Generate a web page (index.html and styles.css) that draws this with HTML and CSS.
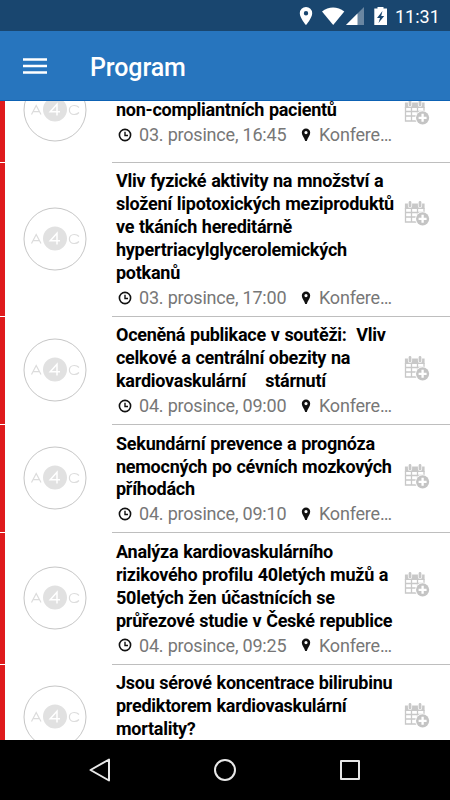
FILE: index.html
```
<!DOCTYPE html>
<html lang="cs">
<head>
<meta charset="utf-8">
<title>Program</title>
<link rel="stylesheet" href="styles.css">
</head>
<body>
<svg width="0" height="0" class="defs">
  <symbol id="logo" viewBox="0 0 64 64">
    <circle cx="32" cy="32" r="31" fill="#fff" stroke="#c6c6c6" stroke-width="1"/>
    <circle cx="32" cy="31.500" r="12" fill="#e1e1e1"/>
    <g fill="none" stroke="#dcdcdc" stroke-width="1.200">
      <path d="M8.500 36.500 13.200 27.500 18 36.500M10.200 33.700H16.300"/>
      <path d="M56 29.500C54.500 27.800 53 27.500 51.200 27.500C44.800 27.500 44.800 36.500 51.200 36.500C53 36.500 54.500 36.200 56 34.500"/>
    </g>
    <path d="M34 37.500V26.200L27.200 33.800H37" fill="none" stroke="#fff" stroke-width="1.500"/>
  </symbol>
  <symbol id="clock" viewBox="0 0 14 14">
    <circle cx="7" cy="7" r="5.600" fill="none" stroke="#111" stroke-width="1.600"/>
    <path d="M7 3.800V7.500H10" fill="none" stroke="#111" stroke-width="1.400"/>
  </symbol>
  <symbol id="pin" viewBox="0 0 10 14">
    <path fill="#111" fill-rule="evenodd" d="M5 .5A4.200 4.200 0 0 0 .8 4.700C.8 7.500 3.500 9.700 4.200 13H5.800C6.500 9.700 9.200 7.500 9.200 4.700A4.200 4.200 0 0 0 5 .5ZM5 3A1.600 1.600 0 1 1 5 6.200A1.600 1.600 0 0 1 5 3Z"/>
  </symbol>
  <symbol id="cal" viewBox="0 0 26 27">
    <path d="M1.500 8V22H20V8M7.500 8V22M13.500 8V22M1.500 12.500H20M1.500 17H19" fill="none" stroke="#c8c8c8" stroke-width="1.300"/>
    <path d="M.9 3.500H20.600V9H.9Z" fill="#c8c8c8"/>
    <path d="M6 2.500V6M16 2.500V6" stroke="#fff" stroke-width="4.200" stroke-linecap="round"/>
    <path d="M6 2.500V6M16 2.500V6" stroke="#c8c8c8" stroke-width="2.800" stroke-linecap="round"/>
    <circle cx="18.600" cy="18.800" r="7.400" fill="#fff"/>
    <circle cx="18.600" cy="18.800" r="6.600" fill="#c4c4c4"/>
    <path d="M18.600 14.800V22.800M14.600 18.800H22.600" stroke="#fff" stroke-width="2.300"/>
  </symbol>
</svg>
<div class="screen">
  <div class="status">
    <svg width="110" height="20" viewBox="0 0 110 20" fill="#fff">
      <path fill-rule="evenodd" d="M16 1A6.200 6.200 0 0 0 9.800 7.200C9.800 12 16 19 16 19S22.200 12 22.200 7.200A6.200 6.200 0 0 0 16 1ZM16 5A2.200 2.200 0 1 1 16 9.400A2.200 2.200 0 0 1 16 5Z"/>
      <path d="M32 5.500C38.500.3 47.500.3 54.300 5.500L43.200 19Z"/>
      <path d="M74 1V19H56Z" opacity=".35"/><path d="M67.500 7.500V19H56Z"/>
      <path fill-rule="evenodd" d="M87.500 1H93.500V2.500H97V19H84.300V2.500H87.500ZM92.500 5 87 12H90L88.500 17 94.200 10H91.200Z"/>
    </svg>
    <span class="time">11:31</span>
  </div>
  <header class="bar">
    <svg width="24" height="18" viewBox="0 0 24 18"><path d="M0 1.500H24M0 8H24M0 14.500H24" stroke="#fff" stroke-width="2.300"/></svg>
    <h1>Program</h1>
  </header>
  <main class="list">
    <article class="row first">
      <div class="side"><svg class="logo"><use href="#logo"/></svg></div>
      <div class="body">
        <div class="text"><h2>non-compliantních pacientů</h2>
        <p><svg class="clock"><use href="#clock"/></svg><span class="date">03. prosince, 16:45</span><svg class="pin"><use href="#pin"/></svg><span>Konfere…</span></p></div>
        <svg class="cal"><use href="#cal"/></svg>
      </div>
    </article>
    <article class="row">
      <div class="side"><svg class="logo"><use href="#logo"/></svg></div>
      <div class="body">
        <div class="text"><h2>Vliv fyzické aktivity na množství a<br>složení lipotoxických meziproduktů<br>ve tkáních hereditárně<br>hypertriacylglycerolemických<br>potkanů</h2>
        <p><svg class="clock"><use href="#clock"/></svg><span class="date">03. prosince, 17:00</span><svg class="pin"><use href="#pin"/></svg><span>Konfere…</span></p></div>
        <svg class="cal"><use href="#cal"/></svg>
      </div>
    </article>
    <article class="row">
      <div class="side"><svg class="logo"><use href="#logo"/></svg></div>
      <div class="body">
        <div class="text"><h2>Oceněná publikace v soutěži:&nbsp; Vliv<br>celkové a centrální obezity na<br>kardiovaskulární&nbsp;&nbsp;&nbsp; stárnutí</h2>
        <p><svg class="clock"><use href="#clock"/></svg><span class="date">04. prosince, 09:00</span><svg class="pin"><use href="#pin"/></svg><span>Konfere…</span></p></div>
        <svg class="cal"><use href="#cal"/></svg>
      </div>
    </article>
    <article class="row">
      <div class="side"><svg class="logo"><use href="#logo"/></svg></div>
      <div class="body">
        <div class="text"><h2>Sekundární prevence a prognóza<br>nemocných po cévních mozkových<br>příhodách</h2>
        <p><svg class="clock"><use href="#clock"/></svg><span class="date">04. prosince, 09:10</span><svg class="pin"><use href="#pin"/></svg><span>Konfere…</span></p></div>
        <svg class="cal"><use href="#cal"/></svg>
      </div>
    </article>
    <article class="row">
      <div class="side"><svg class="logo"><use href="#logo"/></svg></div>
      <div class="body">
        <div class="text"><h2>Analýza kardiovaskulárního<br>rizikového profilu 40letých mužů a<br>50letých žen účastnících se<br>průřezové studie v České republice</h2>
        <p><svg class="clock"><use href="#clock"/></svg><span class="date">04. prosince, 09:25</span><svg class="pin"><use href="#pin"/></svg><span>Konfere…</span></p></div>
        <svg class="cal"><use href="#cal"/></svg>
      </div>
    </article>
    <article class="row">
      <div class="side"><svg class="logo"><use href="#logo"/></svg></div>
      <div class="body">
        <div class="text"><h2>Jsou sérové koncentrace bilirubinu<br>prediktorem kardiovaskulární<br>mortality?</h2>
        <p></p></div>
        <svg class="cal"><use href="#cal"/></svg>
      </div>
    </article>
  </main>
  <nav class="nav">
    <svg viewBox="0 0 24 24"><path d="M21 1.500V22.500L2.500 12Z"/></svg>
    <svg viewBox="0 0 24 24"><circle cx="12" cy="12" r="10"/></svg>
    <svg viewBox="0 0 24 24"><rect x="3" y="3" width="18" height="18"/></svg>
  </nav>
</div>
</body>
</html>
```
FILE: styles.css
```
* { box-sizing: border-box; }
body, h1, h2, p { margin: 0; }
body { width: 450px; height: 800px; overflow: hidden; font-family: Roboto, sans-serif; background: #fff; }
svg { display: block; flex: none; }
.defs { position: absolute; }
.screen { display: flex; flex-direction: column; height: 800px; }
.status { flex: none; height: 31px; padding: 1px 10px 0 0; background: #19466f; color: #fff; display: flex; align-items: center; justify-content: flex-end; }
.time { width: 45px; margin-left: -5px; font-size: 18px; font-weight: 400; letter-spacing: 0; white-space: nowrap; }
.bar { flex: none; height: 70px; padding: 2px 0 0 23px; background: #2775be; border-bottom: 1px solid #0d62b4; color: #fff; display: flex; align-items: center; gap: 43px; }
.bar h1 { font-size: 25px; font-weight: 500; line-height: 32px; padding-top: 2px; letter-spacing: -.1px; }
.list { flex: 1; min-height: 0; overflow: hidden; display: flex; flex-direction: column; }
.row { flex: none; display: flex; border-left: 5px solid #df1a1c; }
.side { width: 107px; margin-left: -5px; padding-left: 23px; flex: none; display: flex; align-items: center; }
.logo { width: 64px; height: 64px; margin-top: -2px; }
.row + .row .side { border-top: 1px solid #fff; border-left: 0; }
.body { flex: 1; display: flex; justify-content: space-between; align-items: flex-start; border-top: 1px solid #bebebe; padding: 7.300px 20px 7.550px 4px; margin-left: 5px; }
.text { white-space: nowrap; }
.text h2 { font-size: 18px; line-height: 22.950px; font-weight: 700; letter-spacing: -.26px; word-spacing: .6px; color: #000; }
.text p { display: flex; align-items: center; height: 22px; margin-top: 1.500px; padding-left: 2px; font-size: 18px; font-weight: 400; letter-spacing: -.2px; color: #777; }
.clock { width: 14px; height: 14px; margin-right: 7px; }
.date { width: 147px; }
.pin { width: 10px; height: 14px; margin: 0 8px 0 15px; }
.cal { width: 26px; height: 27px; margin: 30.200px 0 0 -10px; }
.row.first { margin-top: -40.050px; height: 101px; }
.first .body { padding-top: 37.200px; }
.first .cal { margin-top: 0; }
.nav { flex: none; height: 60px; background: #000; display: flex; justify-content: center; align-items: center; gap: 101px; }
.nav svg { width: 24px; height: 24px; fill: none; stroke: #e8e8e8; stroke-width: 2; stroke-linejoin: round; }
```
